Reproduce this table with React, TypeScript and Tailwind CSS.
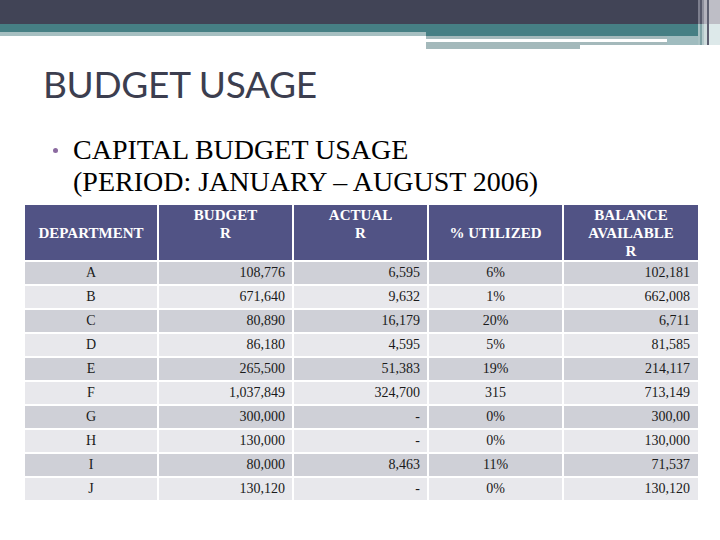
import React from "react";

const rows: [string, string, string, string, string][] = [
  ["A", "108,776", "6,595", "6%", "102,181"],
  ["B", "671,640", "9,632", "1%", "662,008"],
  ["C", "80,890", "16,179", "20%", "6,711"],
  ["D", "86,180", "4,595", "5%", "81,585"],
  ["E", "265,500", "51,383", "19%", "214,117"],
  ["F", "1,037,849", "324,700", "315", "713,149"],
  ["G", "300,000", "-", "0%", "300,00"],
  ["H", "130,000", "-", "0%", "130,000"],
  ["I", "80,000", "8,463", "11%", "71,537"],
  ["J", "130,120", "-", "0%", "130,120"],
];

const serif = { fontFamily: '"Liberation Serif", "Times New Roman", serif' };

export default function App() {
  return (
    <div className="w-[720px] h-[540px] bg-white overflow-hidden flex flex-col" style={serif}>
      {/* top decoration */}
      <div className="flex flex-row h-[49px]">
        <div className="flex-1 flex flex-col">
          <div className="h-[24px] bg-[#414456]" />
          <div className="flex flex-row">
            <div className="w-[426px] flex flex-col">
              <div className="h-[8px] bg-[#467f84]" />
              <div className="h-[4px] bg-[#a6bfc1]" />
            </div>
            <div className="flex-1 flex flex-col">
              <div className="h-[12px] bg-[#467f84]" />
              <div className="flex flex-row">
                <div className="w-[241px] flex flex-col">
                  <div className="h-[3px] bg-[#a4b9bb]" />
                  <div className="h-[3px] bg-white" />
                  <div className="flex flex-row">
                    <div className="w-[154px] h-[7px] bg-[#a4b9bb]" />
                    <div className="flex-1 h-[3px] bg-[#a4b9bb]" />
                  </div>
                </div>
                <div className="flex-1 h-[9px] bg-[#a0bcbf]" />
              </div>
            </div>
          </div>
        </div>
        <div className="w-[22px] flex flex-row">
          <div className="w-[2px] flex flex-col">
            <div className="h-[24px] bg-[#7d7f8e]" />
            <div className="h-[21px] bg-[#a9c2c4]" />
          </div>
          <div className="w-[2px] flex flex-col">
            <div className="h-[24px] bg-[#55586a]" />
            <div className="h-[21px] bg-[#7fa2a5]" />
          </div>
          <div className="w-[2px] flex flex-col">
            <div className="h-[24px] bg-[#8d8f9c]" />
            <div className="h-[21px] bg-[#b4c9cb]" />
          </div>
          <div className="w-[3px] flex flex-col">
            <div className="h-[24px] bg-[#b3b3bd]" />
            <div className="h-[21px] bg-[#cfdcdd]" />
          </div>
          <div className="w-[2px] flex flex-col">
            <div className="h-[45px] bg-[#5c5f70]" />
          </div>
          <div className="flex-1 flex flex-col">
            <div className="h-[24px] bg-[#bebec6]" />
            <div className="h-[21px] bg-[#dde9ea]" />
          </div>
        </div>
      </div>

      {/* title */}
      <div
        className="pl-[43px] mt-[12px] h-[46px] text-[37px] leading-[46px] tracking-[-0.3px] text-[#3c3e4f]"
        style={{ fontFamily: 'Lato, "Open Sans", sans-serif' }}
      >
        BUDGET USAGE
      </div>

      {/* bullet */}
      <div className="flex flex-row pl-[53px] mt-[27px]">
        <div className="w-[20px] pt-[14px]">
          <div className="w-[5px] h-[5px] rounded-full bg-[#8b6aa0]" />
        </div>
        <div className="text-[28px] leading-[32px] text-black">
          <div>CAPITAL BUDGET USAGE</div>
          <div>(PERIOD: JANUARY – AUGUST 2006)</div>
        </div>
      </div>

      {/* table */}
      <div className="ml-[25px] mt-[7px] w-[671px] grid grid-cols-[132px_133px_133px_133px_134px] gap-[2px] bg-white">
        <div className="h-[55px] bg-[#515385] text-white font-bold text-[15px] leading-[18px] flex flex-col items-center justify-center text-center">
          DEPARTMENT
        </div>
        <div className="h-[55px] bg-[#515385] text-white font-bold text-[15px] leading-[18px] flex flex-col items-center justify-center text-center">
          <span>BUDGET</span>
          <span>R</span>
          <span>&nbsp;</span>
        </div>
        <div className="h-[55px] bg-[#515385] text-white font-bold text-[15px] leading-[18px] flex flex-col items-center justify-center text-center">
          <span>ACTUAL</span>
          <span>R</span>
          <span>&nbsp;</span>
        </div>
        <div className="h-[55px] bg-[#515385] text-white font-bold text-[15px] leading-[18px] flex flex-col items-center justify-center text-center">
          % UTILIZED
        </div>
        <div className="h-[55px] bg-[#515385] text-white font-bold text-[15px] leading-[18px] flex flex-col items-center justify-center text-center">
          <span>BALANCE</span>
          <span>AVAILABLE</span>
          <span>R</span>
        </div>
        {rows.map((r, i) => {
          const bg = i % 2 === 0 ? "bg-[#cfd0d7]" : "bg-[#e8e8ec]";
          return (
            <React.Fragment key={r[0]}>
              <div className={`h-[22px] ${bg} text-[14px] leading-[22px] text-[#1a1a1a] text-center`}>{r[0]}</div>
              <div className={`h-[22px] ${bg} text-[14px] leading-[22px] text-[#1a1a1a] text-right pr-[7px]`}>{r[1]}</div>
              <div className={`h-[22px] ${bg} text-[14px] leading-[22px] text-[#1a1a1a] text-right pr-[7px]`}>{r[2]}</div>
              <div className={`h-[22px] ${bg} text-[14px] leading-[22px] text-[#1a1a1a] text-center`}>{r[3]}</div>
              <div className={`h-[22px] ${bg} text-[14px] leading-[22px] text-[#1a1a1a] text-right pr-[8px]`}>{r[4]}</div>
            </React.Fragment>
          );
        })}
      </div>
    </div>
  );
}
